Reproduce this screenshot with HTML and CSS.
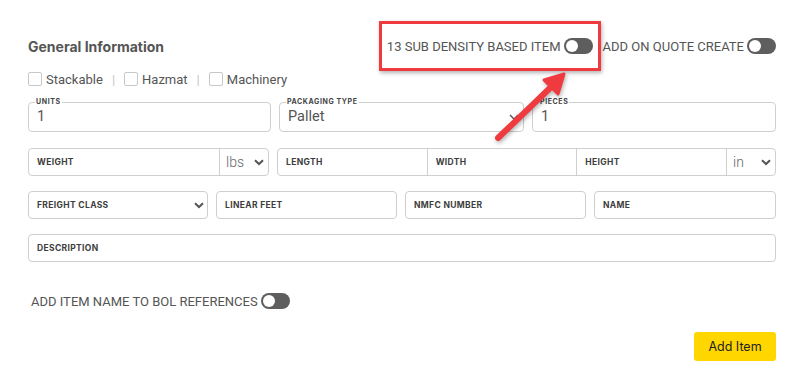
FILE: index.html
```html
<!DOCTYPE html>
<html lang="en">
<head>
    <meta charset="UTF-8">
    <meta name="viewport" content="width=device-width, initial-scale=1.0">
    <title>General Information</title>
    <link rel="stylesheet" href="styles.css">
</head>
<body>

    <div class="page">
        <!-- Header with title and switches -->
        <div class="header">
            <h3 class="title">General Information</h3>
            <div class="switches">
                <label class="switch-item highlighted">13 SUB DENSITY BASED ITEM <span class="toggle"></span></label>
                <label class="switch-item">ADD ON QUOTE CREATE <span class="toggle"></span></label>
            </div>
        </div>

        <!-- Flags -->
        <div class="flags">
            <label class="flag"><input type="checkbox"> Stackable</label>
            <span class="sep">|</span>
            <label class="flag"><input type="checkbox"> Hazmat</label>
            <span class="sep">|</span>
            <label class="flag"><input type="checkbox"> Machinery</label>
        </div>

        <!-- Units / packaging / pieces -->
        <div class="row row-three">
            <fieldset class="outlined">
                <legend>UNITS</legend>
                <input type="text" value="1">
            </fieldset>
            <fieldset class="outlined">
                <legend>PACKAGING TYPE</legend>
                <div class="select-wrap">
                    <select><option>Pallet</option></select>
                    <svg class="chev thin" width="10" height="7" viewBox="0 0 10 7"><path d="M1 1 L5 5 L9 1" fill="none" stroke="#555" stroke-width="1.4"/></svg>
                </div>
            </fieldset>
            <fieldset class="outlined">
                <legend>PIECES</legend>
                <input type="text" value="1">
            </fieldset>
        </div>

        <!-- Weight and dimensions -->
        <div class="row row-dims">
            <div class="group">
                <input type="text" class="field" placeholder="WEIGHT">
                <div class="unit">
                    <select><option>lbs</option></select>
                    <svg class="chev" width="10" height="7" viewBox="0 0 10 7"><path d="M1 1.2 L5 5 L9 1.2" fill="none" stroke="#555" stroke-width="2"/></svg>
                </div>
            </div>
            <div class="group">
                <input type="text" class="field" placeholder="LENGTH">
                <input type="text" class="field" placeholder="WIDTH">
                <input type="text" class="field" placeholder="HEIGHT">
                <div class="unit">
                    <select><option>in</option></select>
                    <svg class="chev" width="10" height="7" viewBox="0 0 10 7"><path d="M1 1.2 L5 5 L9 1.2" fill="none" stroke="#555" stroke-width="2"/></svg>
                </div>
            </div>
        </div>

        <div class="row row-four">
            <div class="group">
                <div class="select-wrap">
                    <select class="field"><option>FREIGHT CLASS</option></select>
                    <svg class="chev" width="10" height="7" viewBox="0 0 10 7"><path d="M1 1.2 L5 5 L9 1.2" fill="none" stroke="#555" stroke-width="2"/></svg>
                </div>
            </div>
            <div class="group"><input type="text" class="field" placeholder="LINEAR FEET"></div>
            <div class="group"><input type="text" class="field" placeholder="NMFC NUMBER"></div>
            <div class="group"><input type="text" class="field" placeholder="NAME"></div>
        </div>

        <div class="row">
            <div class="group"><input type="text" class="field" placeholder="DESCRIPTION"></div>
        </div>

        <label class="switch-item bol">ADD ITEM NAME TO BOL REFERENCES <span class="toggle"></span></label>

        <div class="actions">
            <button class="add-btn">Add Item</button>
        </div>

        <!-- Annotation arrow -->
        <svg class="arrow" width="90" height="84" viewBox="0 0 90 84">
            <line x1="10" y1="74" x2="62" y2="24" stroke="#ef3b3f" stroke-width="6" stroke-linecap="round"/>
            <polygon points="76,10 56,16 70,30" fill="#ef3b3f" stroke="#ef3b3f" stroke-width="3" stroke-linejoin="round"/>
        </svg>
    </div>

</body>
</html>
```

FILE: styles.css
```css
/* Page */
body {
    margin: 0;
    background: #ffffff;
    font-family: Roboto, "Liberation Sans", sans-serif;
    color: #555555;
}

.page {
    position: relative;
    width: 748px;
    padding: 36px 27px 0 28px;
}

/* Header */
.header {
    display: flex;
    justify-content: space-between;
    align-items: center;
    height: 20px;
}

.title {
    margin: 0;
    font-family: Inter, "Liberation Sans", sans-serif;
    font-size: 14px;
    font-weight: 700;
    color: #555555;
}

.switches {
    display: flex;
    align-items: center;
    gap: 10px;
}

.switch-item {
    display: flex;
    align-items: center;
    gap: 3px;
    font-size: 13px;
    color: #555555;
    white-space: nowrap;
}

.toggle {
    display: inline-block;
    position: relative;
    width: 29px;
    height: 16px;
    border-radius: 8px;
    background: #5e5e5e;
}

.toggle::before {
    content: "";
    position: absolute;
    left: 2px;
    top: 2px;
    width: 12px;
    height: 12px;
    border-radius: 50%;
    background: #ffffff;
}

/* red highlight box around first switch */
.highlighted {
    position: relative;
}

.highlighted::after {
    content: "";
    position: absolute;
    left: -8px;
    right: -8px;
    top: -17px;
    bottom: -17px;
    border: 3px solid #ef3b3f;
    box-shadow: 1px 2px 4px rgba(0, 0, 0, 0.3);
}

/* Flags */
.flags {
    display: flex;
    align-items: center;
    margin-top: 15px;
    height: 16px;
    font-size: 13px;
}

.flag {
    display: flex;
    align-items: center;
    gap: 4px;
}

.flag input {
    appearance: none;
    margin: 0;
    width: 14px;
    height: 14px;
    border: 1px solid #c8c8c8;
    border-radius: 2px;
}

.sep {
    color: #c4c4c4;
    margin: 0 9px;
}

/* Rows */
.row {
    display: grid;
    gap: 8px;
    margin-top: 15px;
}

.row-three {
    grid-template-columns: 243px 245px 1fr;
    margin-top: 11px;
}

.row-dims {
    grid-template-columns: 241px 1fr;
    margin-top: 16px;
}

.row-four {
    grid-template-columns: 180px 181px 181px 1fr;
}

.outlined {
    margin: 0;
    padding: 0 8px;
    border: 1px solid #cfcfcf;
    border-radius: 4px;
    height: 34px;
    box-sizing: border-box;
}

.outlined legend {
    font-family: Inter, "Liberation Sans", sans-serif;
    font-size: 7px;
    font-weight: 700;
    letter-spacing: 0.6px;
    color: #444444;
    padding: 0 1px;
    margin-left: -2px;
    line-height: 8px;
}

.outlined input,
.outlined select {
    border: none;
    outline: none;
    width: 100%;
    padding: 0;
    margin: 0;
    font-family: Roboto, "Liberation Sans", sans-serif;
    font-size: 14.5px;
    color: #555555;
    background: transparent;
    appearance: none;
    height: 22px;
    line-height: 22px;
}

.select-wrap {
    position: relative;
}

.chev {
    position: absolute;
    right: 3px;
    top: 50%;
    margin-top: -3px;
    pointer-events: none;
}

.outlined .chev {
    right: -4px;
}

.group {
    display: flex;
    height: 28px;
    border: 1px solid #cfcfcf;
    border-radius: 4px;
    box-sizing: border-box;
    overflow: hidden;
}

.group > * {
    flex: 1;
    min-width: 0;
}

.field {
    border: none;
    outline: none;
    margin: 0;
    padding: 0 8px;
    height: 26px;
    width: 100%;
    box-sizing: border-box;
    font-family: Inter, "Liberation Sans", sans-serif;
    font-size: 8.5px;
    font-weight: 700;
    letter-spacing: 0.35px;
    color: #3d3d3d;
    background: transparent;
    appearance: none;
}

.field + .field {
    border-left: 1px solid #cfcfcf;
}

.field::placeholder {
    color: #3d3d3d;
}

.unit {
    position: relative;
    flex: 0 0 48px;
    border-left: 1px solid #cfcfcf;
}

.unit select {
    appearance: none;
    border: none;
    outline: none;
    margin: 0;
    padding: 0 0 0 6px;
    width: 100%;
    height: 26px;
    font-family: Roboto, "Liberation Sans", sans-serif;
    font-size: 14px;
    font-weight: 300;
    color: #666666;
    background: transparent;
}

.unit .chev {
    right: 4px;
}

/* Bottom */
.bol {
    margin-top: 31px;
    margin-left: 3px;
    height: 16px;
}

.actions {
    display: flex;
    justify-content: flex-end;
    margin-top: 23px;
}

.add-btn {
    background: #ffd600;
    border: none;
    border-radius: 3px;
    width: 82px;
    height: 29px;
    font-family: Inter, "Liberation Sans", sans-serif;
    font-size: 12.5px;
    color: #222222;
    cursor: pointer;
}

/* Annotation arrow */
.arrow {
    position: absolute;
    left: 488px;
    top: 64px;
    filter: drop-shadow(1px 2px 2px rgba(0, 0, 0, 0.3));
}
```
